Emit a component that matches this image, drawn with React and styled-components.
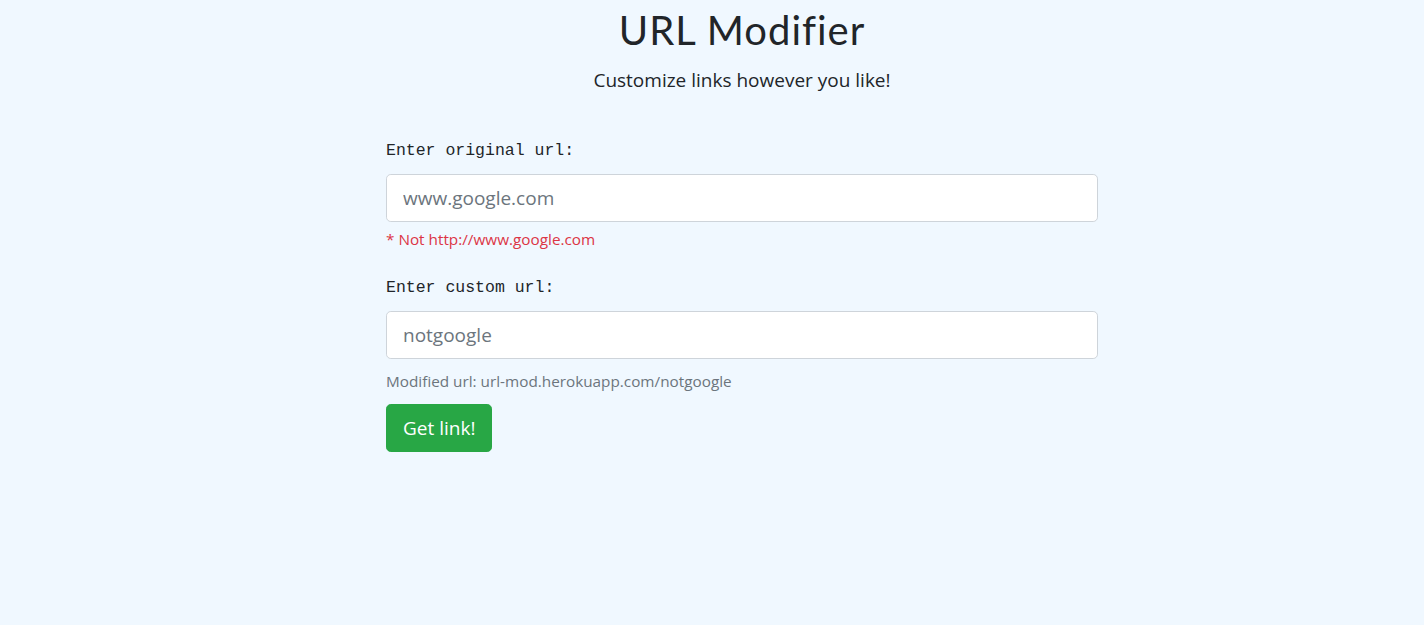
import styled, { createGlobalStyle } from "styled-components"

const GlobalStyle = createGlobalStyle`
    body {
        margin: 0;
        background: #f0f8ff;
        font-family: "Open Sans", "Noto Sans", sans-serif;
        color: #212529;
    }
`

const App = () => {

    return (

        <Page>

            <GlobalStyle />

            <Header>

                <Title>URL Modifier</Title>

                <Lead>Customize links however you like!</Lead>

            </Header>

            <Form onSubmit={(e) => e.preventDefault()}>

                <Group>

                    <Label htmlFor="original">Enter original url:</Label>

                    <Input id="original" placeholder="www.google.com" />

                    <Hint $error>* Not http://www.google.com</Hint>

                </Group>

                <Group $last>

                    <Label htmlFor="custom">Enter custom url:</Label>

                    <Input id="custom" placeholder="notgoogle" />

                    <Hint $gap={12}>Modified url: url-mod.herokuapp.com/notgoogle</Hint>

                </Group>

                <Button type="submit">Get link!</Button>

            </Form>

        </Page>

    )

}

const Button = styled.button`
    align-self: flex-start;
    height: 48px;
    padding: 0 16px;
    border: 1px solid #28a745;
    border-radius: 4.8px;
    background: #28a745;
    color: #fff;
    font-family: inherit;
    font-size: 19px;
    cursor: pointer;
`

const Hint = styled.small`
    display: block;
    margin-top: ${(props) => props.$gap || 7}px;
    font-size: 15.3px;
    line-height: 20px;
    color: ${(props) => (props.$error ? "#dc3545" : "#6c757d")};
`

const Input = styled.input`
    box-sizing: border-box;
    width: 100%;
    height: 48px;
    padding: 8px 16px;
    border: 1px solid #ced4da;
    border-radius: 4.8px;
    background: #fff;
    font-family: inherit;
    font-size: 19px;
    color: #495057;

    &::placeholder {
        color: #6c757d;
    }
`

const Label = styled.label`
    display: block;
    margin-bottom: 11px;
    font-family: "Liberation Mono", "DejaVu Sans Mono", monospace;
    font-size: 16.5px;
    line-height: 24px;
    color: #212529;
`

const Group = styled.div`
    display: flex;
    flex-direction: column;
    margin-bottom: ${(props) => (props.$last ? 13 : 27)}px;
`

const Form = styled.form`
    width: 712px;
    margin: 0 auto;
    display: flex;
    flex-direction: column;
    text-align: left;
`

const Lead = styled.p`
    margin: 12px 0 0;
    font-size: 19px;
    line-height: 28px;
`

const Title = styled.h1`
    margin: 0;
    font-family: "Lato", sans-serif;
    font-weight: 400;
    font-size: 40px;
    line-height: 48px;
    letter-spacing: 1px;
`

const Header = styled.header`
    padding-top: 6px;
    margin-bottom: 45px;
    text-align: center;
`

const Page = styled.main`
    padding-left: 60px;
`

export default App
